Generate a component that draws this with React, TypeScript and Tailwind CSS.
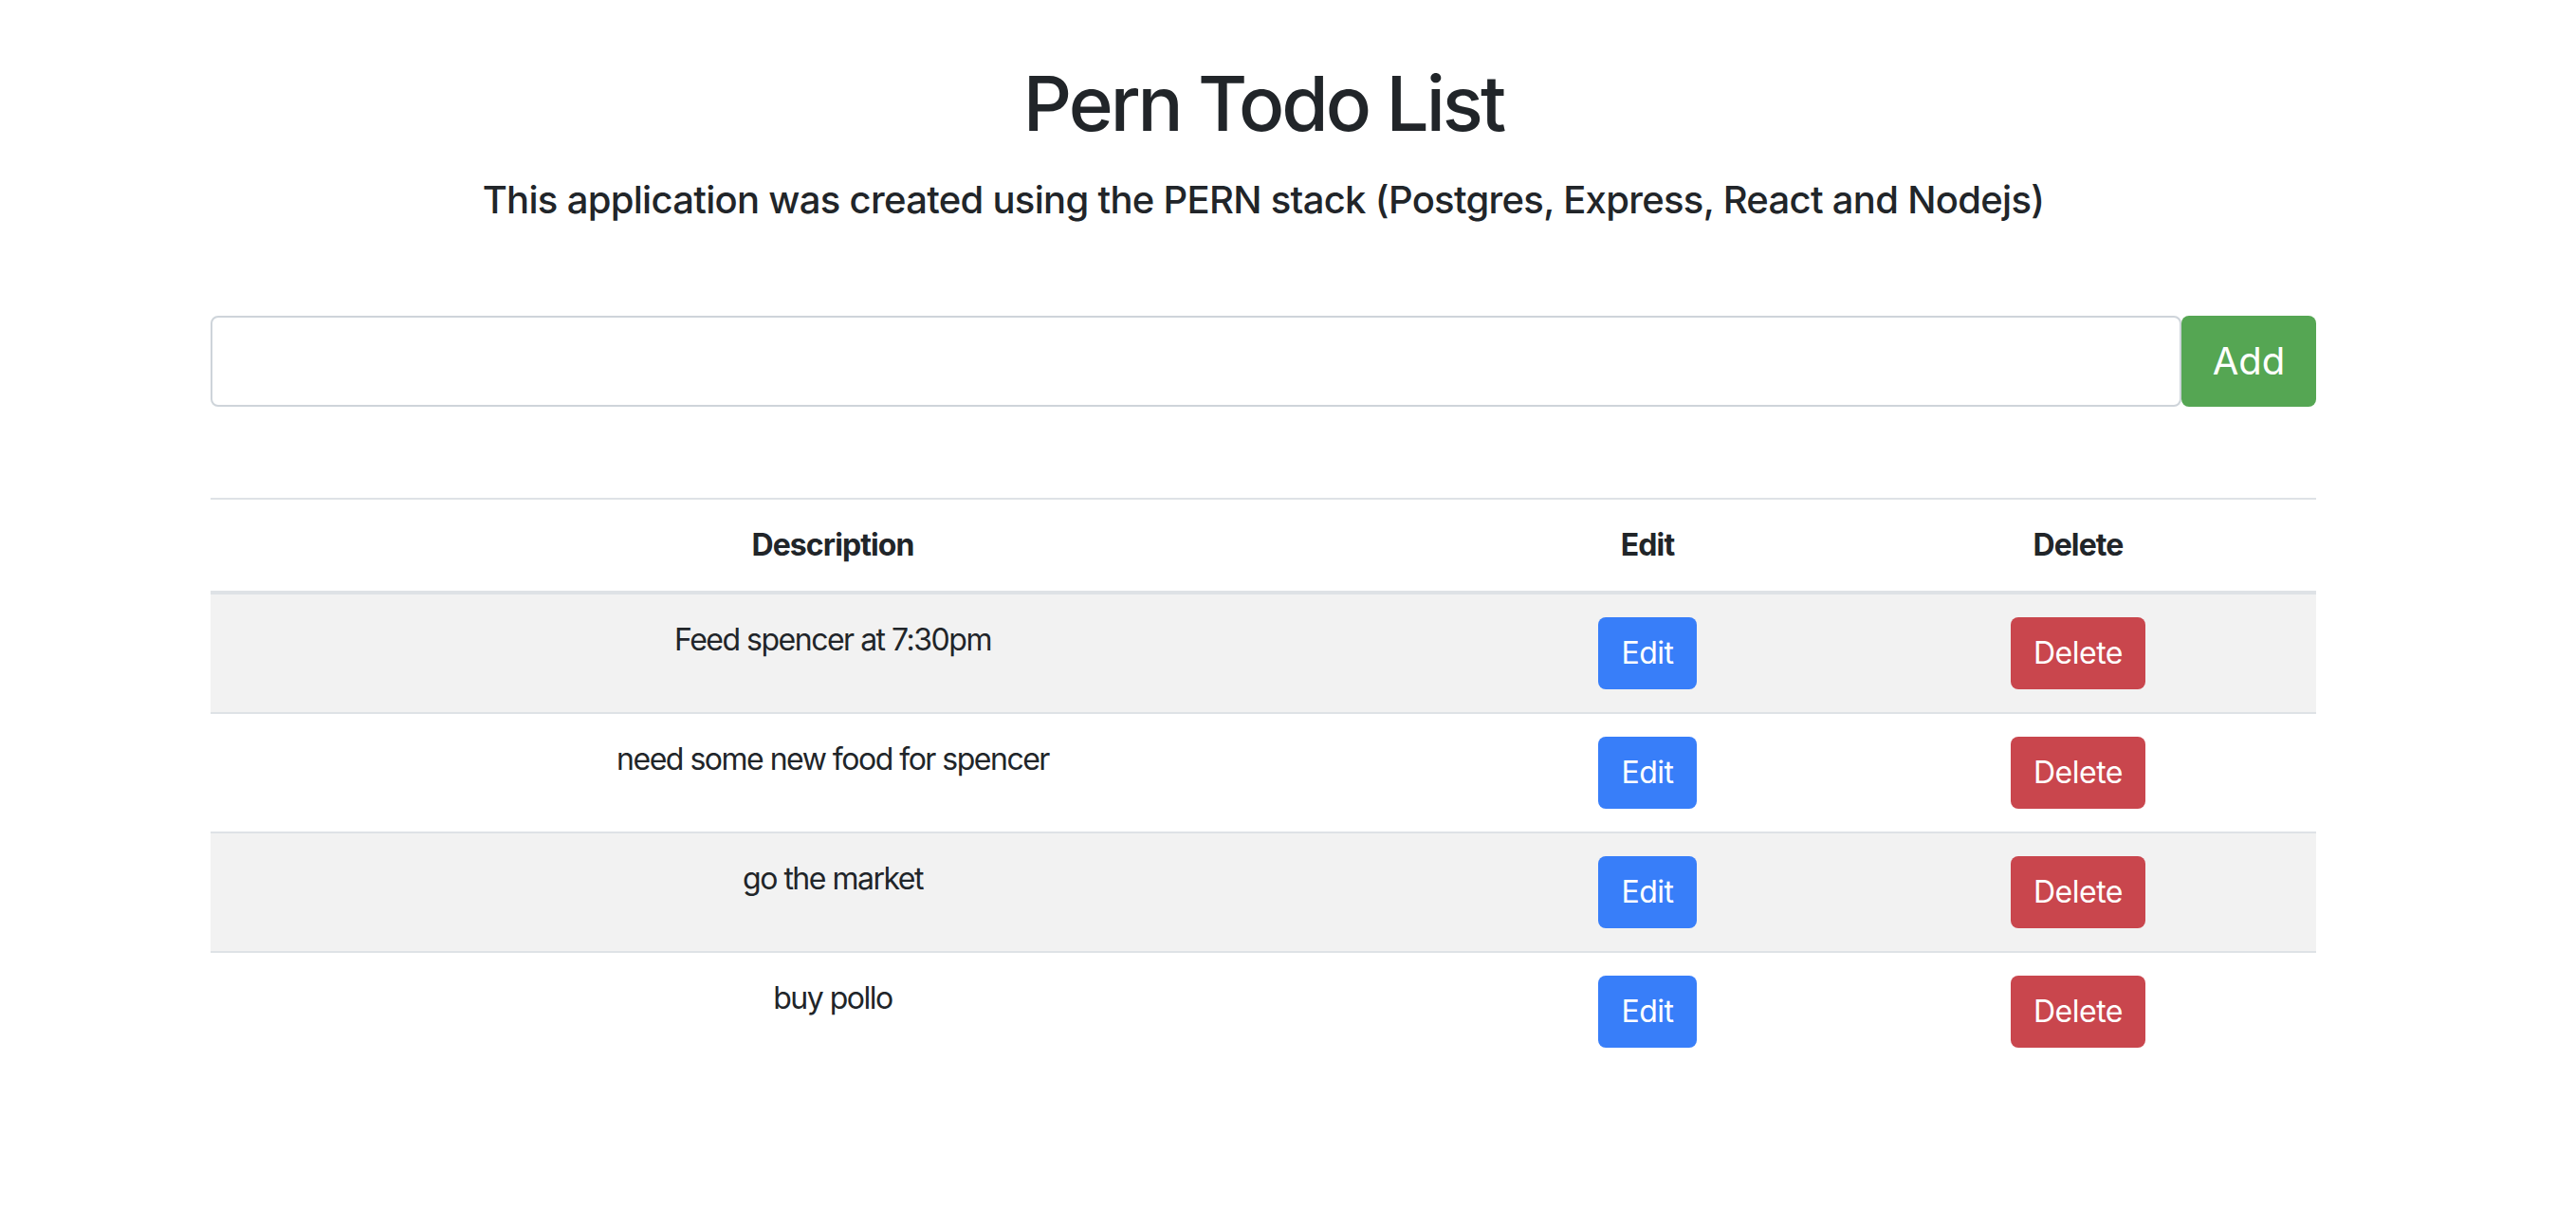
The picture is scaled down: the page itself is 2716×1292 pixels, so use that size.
const todos = [
  { id: 1, description: 'Feed spencer at 7:30pm' },
  { id: 2, description: 'need some new food for spencer' },
  { id: 3, description: 'go the market' },
  { id: 4, description: 'buy pollo' },
]

export default function App() {
  return (
    <div className="min-h-screen w-full bg-white text-[#212529] font-['Inter','Liberation_Sans',sans-serif]">
      <div className="w-[2664px]">
        <div className="mx-auto w-[2220px] pt-[61px]">
          <h1 className="text-center text-[80px] leading-[96px] font-medium tracking-[-3px]">Pern Todo List</h1>
          <h5 className="mt-[30px] text-center text-[40px] leading-[48px] font-medium tracking-[-0.7px]">
            This application was created using the PERN stack (Postgres, Express, React and Nodejs)
          </h5>

          <form className="mt-[98px] flex" onSubmit={(e) => e.preventDefault()}>
            <input
              type="text"
              className="h-[96px] flex-1 rounded-lg border-2 border-[#ced4da] bg-white px-8 text-[40px] outline-none"
            />
            <button className="h-[96px] w-[142px] rounded-lg bg-[#55a653] text-[40px] text-white">Add</button>
          </form>

          <table className="mt-[96px] w-full border-collapse text-center text-[32px] leading-[48px]">
            <thead>
              <tr>
                <th className="w-[1312px] border-t-2 border-b-4 border-[#dee2e6] p-6 font-bold tracking-[-0.9px]">Description</th>
                <th className="w-[406px] border-t-2 border-b-4 border-[#dee2e6] p-6 font-bold tracking-[-0.9px]">Edit</th>
                <th className="w-[502px] border-t-2 border-b-4 border-[#dee2e6] p-6 font-bold tracking-[-0.9px]">Delete</th>
              </tr>
            </thead>
            <tbody>
              {todos.map((todo, i) => (
                <tr key={todo.id} className={i % 2 === 0 ? 'bg-[#f2f2f2]' : 'bg-white'}>
                  <td className="border-t-2 border-[#dee2e6] p-6 align-top tracking-[-1.5px]">{todo.description}</td>
                  <td className="border-t-2 border-[#dee2e6] p-6 align-top">
                    <button className="h-[76px] w-[104px] rounded-lg bg-[#387ef9] text-[32px] tracking-[-0.5px] text-white">Edit</button>
                  </td>
                  <td className="border-t-2 border-[#dee2e6] p-6 align-top">
                    <button className="h-[76px] w-[142px] rounded-lg bg-[#c9464d] text-[32px] tracking-[-0.5px] text-white">Delete</button>
                  </td>
                </tr>
              ))}
            </tbody>
          </table>
        </div>
      </div>
    </div>
  )
}
